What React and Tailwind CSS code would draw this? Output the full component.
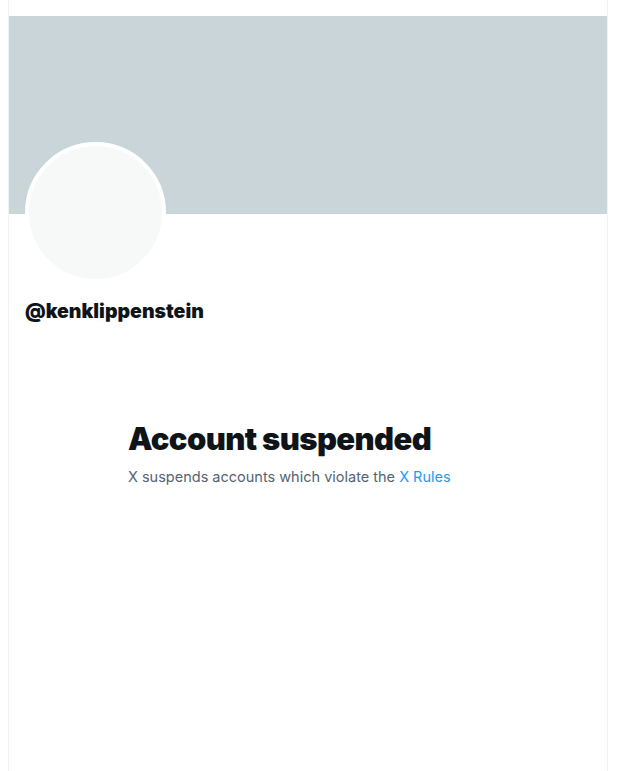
import React from 'react';

export default function App() {
  return (
    <div className="min-h-[771px] bg-white" style={{ fontFamily: 'Inter, "Noto Sans", sans-serif' }}>
      <div className="ml-[8px] w-[600px] min-h-[771px] border-x border-[#eff3f4] pt-4">
        {/* Banner */}
        <div className="h-[198px] bg-[#c9d5d9]" />

        {/* Avatar + handle */}
        <div className="px-4">
          <div className="-mt-[72px] w-[141px] h-[141px] rounded-full border-4 border-white bg-[#f7f9f9]" />
          <div className="mt-[16px] text-[19.5px] leading-6 font-black text-[#0f1419]">@kenklippenstein</div>
        </div>

        {/* Empty state */}
        <div className="ml-[119px] mt-[98px]">
          <h1 className="text-[31px] leading-9 font-black tracking-[-0.6px] text-[#0f1419]">Account suspended</h1>
          <p className="mt-[10px] text-[14.5px] leading-5 text-[#536471]">
            X suspends accounts which violate the <span className="text-[#1d9bf0]">X Rules</span>
          </p>
        </div>
      </div>
    </div>
  );
}
